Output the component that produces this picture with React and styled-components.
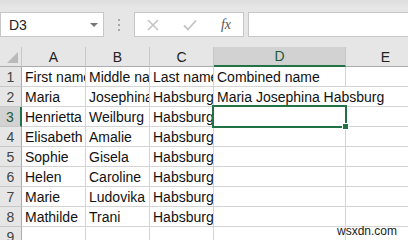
import React from 'react';
import styled, { createGlobalStyle } from 'styled-components';

const GlobalStyle = createGlobalStyle`
  html, body { margin: 0; padding: 0; background: #fff; }
  body { font-family: 'Liberation Sans', Arial, sans-serif; }
`;

const Page = styled.div`
  width: 408px;
  height: 240px;
  overflow: hidden;
  position: relative;
  background: #e6e6e6;
`;

const Toolbar = styled.div`
  display: flex;
  align-items: center;
  height: 25px;
  padding: 12px 0 10px 0;
  background: linear-gradient(#dedede, #e6e6e6 8px);
`;

const NameBox = styled.div`
  box-sizing: border-box;
  width: 104px;
  height: 25px;
  display: flex;
  align-items: center;
  justify-content: space-between;
  padding: 0 5px 0 8px;
  background: #fff;
  border: 1px solid #c6c6c6;
  font-size: 14px;
  color: #222;
`;

const Caret = styled.span`
  width: 0;
  height: 0;
  border-left: 4px solid transparent;
  border-right: 4px solid transparent;
  border-top: 4px solid #777;
`;

const Grip = styled.div`
  width: 30px;
  display: flex;
  flex-direction: column;
  align-items: center;
  gap: 3px;
  span {
    width: 2px;
    height: 2px;
    background: #a8a8a8;
  }
`;

const ActionBox = styled.div`
  box-sizing: border-box;
  width: 110px;
  height: 25px;
  display: flex;
  align-items: center;
  background: #fff;
  border: 1px solid #c6c6c6;
`;

const Action = styled.div`
  width: ${p => p.w}px;
  display: flex;
  align-items: center;
  justify-content: center;
`;

const Fx = styled.span`
  font-family: 'Liberation Serif', 'Times New Roman', serif;
  font-style: italic;
  font-size: 14px;
  color: #555;
`;

const FormulaInput = styled.div`
  flex: 1;
  box-sizing: border-box;
  height: 25px;
  margin-left: 4px;
  background: #fff;
  border: 1px solid #c6c6c6;
  border-right: none;
`;

const Sheet = styled.div`
  display: grid;
  grid-template-columns: 22px 64px 64px 64px 132px 80px;
  grid-auto-rows: 20px;
  background: #fff;
`;

const Corner = styled.div`
  position: relative;
  background: #e6e6e6;
  border-right: 1px solid #c8c8c8;
  border-bottom: 1px solid #ababab;
  &::after {
    content: '';
    position: absolute;
    right: 3px;
    bottom: 3px;
    width: 0;
    height: 0;
    border-left: 11px solid transparent;
    border-bottom: 11px solid #b9b9b9;
  }
`;

const ColHead = styled.div`
  box-sizing: border-box;
  display: flex;
  align-items: center;
  justify-content: center;
  font-size: 14px;
  color: ${p => (p.active ? '#1e5a36' : '#222')};
  background: ${p => (p.active ? '#d2d2d2' : '#e6e6e6')};
  border-right: 1px solid #c8c8c8;
  border-bottom: ${p => (p.active ? '2px solid #217346' : '1px solid #ababab')};
`;

const RowHead = styled.div`
  box-sizing: border-box;
  display: flex;
  align-items: center;
  justify-content: center;
  padding-top: 1px;
  font-size: 14px;
  color: ${p => (p.active ? '#1e5a36' : '#444')};
  background: ${p => (p.active ? '#d2d2d2' : '#e6e6e6')};
  border-right: ${p => (p.active ? '2px solid #217346' : '1px solid #ababab')};
  border-bottom: 1px solid #c8c8c8;
`;

const Cell = styled.div`
  box-sizing: border-box;
  position: relative;
  display: flex;
  align-items: center;
  padding: 1px 0 0 3px;
  font-size: 14px;
  color: #111;
  white-space: nowrap;
  overflow: ${p => (p.spill || p.selected ? 'visible' : 'hidden')};
  z-index: ${p => (p.selected ? 2 : p.spill ? 1 : 0)};
  border-right: 1px solid ${p => (p.spill ? 'transparent' : '#d4d4d4')};
  border-bottom: 1px solid #d4d4d4;
`;

const Selection = styled.div`
  position: absolute;
  left: -2px;
  top: -2px;
  right: -2px;
  bottom: -2px;
  border: 2px solid #217346;
  pointer-events: none;
  &::after {
    content: '';
    position: absolute;
    right: -4px;
    bottom: -4px;
    width: 5px;
    height: 5px;
    background: #217346;
    border: 1px solid #fff;
  }
`;

const Watermark = styled.div`
  position: absolute;
  right: 11px;
  bottom: 2px;
  font-size: 12px;
  color: #222;
`;

const columns = ['A', 'B', 'C', 'D', 'E'];

const rows = [
  ['First name', 'Middle name', 'Last name', 'Combined name', ''],
  ['Maria', 'Josephina', 'Habsburg', 'Maria Josephina Habsburg', ''],
  ['Henrietta', 'Weilburg', 'Habsburg', '', ''],
  ['Elisabeth', 'Amalie', 'Habsburg', '', ''],
  ['Sophie', 'Gisela', 'Habsburg', '', ''],
  ['Helen', 'Caroline', 'Habsburg', '', ''],
  ['Marie', 'Ludovika', 'Habsburg', '', ''],
  ['Mathilde', 'Trani', 'Habsburg', '', ''],
  ['', '', '', '', ''],
];

export default function App() {
  return (
    <Page>
      <GlobalStyle />
      <Toolbar>
        <NameBox>
          D3
          <Caret />
        </NameBox>
        <Grip>
          <span />
          <span />
          <span />
        </Grip>
        <ActionBox>
          <Action w={36}>
            <svg width="12" height="12" viewBox="0 0 12 12">
              <path d="M1 1 L11 11 M11 1 L1 11" stroke="#c4c4c4" strokeWidth="1.6" fill="none" />
            </svg>
          </Action>
          <Action w={38}>
            <svg width="14" height="12" viewBox="0 0 14 12">
              <path d="M1 6.5 L5 10.5 L13 1.5" stroke="#c4c4c4" strokeWidth="1.8" fill="none" />
            </svg>
          </Action>
          <Action w={34}>
            <Fx>fx</Fx>
          </Action>
        </ActionBox>
        <FormulaInput />
      </Toolbar>

      <Sheet>
        <Corner />
        {columns.map(c => (
          <ColHead key={c} active={c === 'D'}>{c}</ColHead>
        ))}
        {rows.map((row, r) => (
          <React.Fragment key={r}>
            <RowHead active={r === 2}>{r + 1}</RowHead>
            {row.map((val, c) => {
              const selected = r === 2 && c === 3;
              return (
                <Cell key={c} spill={r === 1 && c === 3} selected={selected}>
                  {val}
                  {selected && <Selection />}
                </Cell>
              );
            })}
          </React.Fragment>
        ))}
      </Sheet>
      <Watermark>wsxdn.com</Watermark>
    </Page>
  );
}
